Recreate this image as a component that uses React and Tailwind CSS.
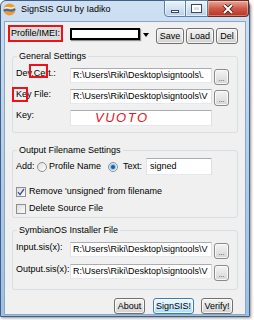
// SignSIS GUI window — Windows 7 styled dialog with three group boxes.

const PATH1 = 'R:\\Users\\Riki\\Desktop\\signtools\\.'
const PATH2 = 'R:\\Users\\Riki\\Desktop\\signtools\\V'

function Btn({ children, className = '', primary }) {
  return (
    <button
      className={`h-[16px] rounded-[3px] border text-[9px] leading-none text-black flex items-center justify-center shadow-[inset_0_0_0_1px_rgba(255,255,255,0.75)] ${
        primary
          ? 'border-[#3c7fb1] bg-linear-to-b from-[#eaf6fd] via-[#d9f0fc] to-[#a7d9f5]'
          : 'border-[#707070] bg-linear-to-b from-[#f2f2f2] via-[#e6e6e6] to-[#cfcfcf]'
      } ${className}`}
    >
      {children}
    </button>
  )
}

function Browse() {
  return (
    <button className="ml-[2px] mt-[1px] w-[15px] h-[16px] rounded-[3px] border border-[#8a8a8a] bg-linear-to-b from-[#f4f4f4] to-[#d6d6d6] shadow-[inset_0_0_0_1px_rgba(255,255,255,0.75)] flex items-end justify-center pb-[2px] text-[7px] leading-none text-[#333]">
      ...
    </button>
  )
}

function TextBox({ children, className = 'w-[142px] h-[15px]' }) {
  return (
    <div
      className={`bg-white border border-[#abadb3] border-l-[#e2e3ea] border-r-[#dbdfe6] border-b-[#e3e9ef] px-[2px] text-[9px] leading-[13px] whitespace-nowrap overflow-hidden ${className}`}
    >
      {children}
    </div>
  )
}

function PathRow({ label, value, mark }) {
  return (
    <div className="flex items-start">
      <span className="relative w-[57px] pl-[3px] leading-[11px]">
        {label}
        {mark}
      </span>
      <TextBox>{value}</TextBox>
      <Browse />
    </div>
  )
}

function Radio({ checked }) {
  return (
    <span className="w-[10px] h-[10px] rounded-full border border-[#8e8f8f] bg-linear-to-br from-[#dedede] to-white flex items-center justify-center">
      {checked && <span className="w-[4px] h-[4px] rounded-full bg-[#1b5fa8] shadow-[0_0_1px_1px_#7fc2ef]" />}
    </span>
  )
}

function Check({ checked }) {
  return (
    <span className="w-[10px] h-[10px] border border-[#8e8f8f] bg-linear-to-br from-[#dcdcdc] to-[#fcfcfc] flex items-center justify-center">
      {checked && (
        <svg width="8" height="8" viewBox="0 0 8 8">
          <path d="M1 4.2 L3 6.6 L7 1" stroke="#3d5496" strokeWidth="1.3" fill="none" />
        </svg>
      )}
    </span>
  )
}

function Group({ title, className = '', children }) {
  return (
    <fieldset className={`ml-[7px] w-[226px] border border-[#d5dfe5] rounded-[3px] ${className}`}>
      <legend className="ml-[4px] px-[2px] text-[9px] leading-[11px]">{title}</legend>
      {children}
    </fieldset>
  )
}

export default function App() {
  return (
    <div className="w-[254px] h-[320px] bg-white text-[9px] text-black font-['Liberation_Sans',Arial,sans-serif]">
      <div className="w-[250px] h-[317px] flex flex-col rounded-t-[6px] border border-[#3d5f88] bg-linear-to-b from-[#cfe0f3] via-[#b4cde9] to-[#9fbfe3] shadow-[1px_1px_3px_rgba(0,0,0,0.45)]">
        {/* title bar */}
        <div className="h-[20px] shrink-0 flex items-start">
          <svg className="ml-[2px] mt-[2px]" width="13" height="13" viewBox="0 0 13 13">
            <circle cx="6.5" cy="6.5" r="6" fill="#f39a2a" />
            <path d="M1 8 C4 4.5, 8 10.5, 12 6" stroke="#2a6fc0" strokeWidth="2.2" fill="none" />
            <path d="M1.5 5.5 C4.5 2.8, 8 7.5, 11.5 3.8" stroke="#fff" strokeWidth="1.2" fill="none" />
          </svg>
          <span className="ml-[5px] mt-[3px] leading-[11px]">SignSIS GUI by Iadiko</span>
          <div className="ml-auto -mt-px flex h-[17px]">
            <div className="w-[22px] rounded-bl-[4px] border border-[#5b7fa8] bg-linear-to-b from-[#eef4fb] via-[#d3e2f3] to-[#b9cfe9] shadow-[inset_0_0_0_1px_rgba(255,255,255,0.6)] flex items-end justify-center pb-[3px]">
              <span className="w-[8px] h-[3px] bg-white border border-[#3a4a5e]" />
            </div>
            <div className="w-[22px] border border-l-0 border-[#5b7fa8] bg-linear-to-b from-[#eef4fb] via-[#d3e2f3] to-[#b9cfe9] shadow-[inset_0_0_0_1px_rgba(255,255,255,0.6)] flex items-center justify-center">
              <span className="w-[9px] h-[7px] border-[2px] border-white outline outline-[#3a4a5e]" />
            </div>
            <div className="w-[41px] rounded-br-[4px] border border-l-0 border-[#6b2a22] bg-linear-to-b from-[#e6a79c] via-[#cf5a48] to-[#b8321f] shadow-[inset_0_0_0_1px_rgba(255,255,255,0.35)] flex items-center justify-center">
              <svg width="12" height="10" viewBox="0 0 12 10">
                <path d="M2 1 L10 9 M10 1 L2 9" stroke="#3a1a14" strokeWidth="3.6" />
                <path d="M2 1 L10 9 M10 1 L2 9" stroke="#fff" strokeWidth="2" />
              </svg>
            </div>
          </div>
        </div>

        {/* client area */}
        <div className="flex-1 mx-[3px] mb-[4px] bg-[#f0f0f0] border border-[#8da6c1] flex flex-col">
          <div className="flex items-start pt-[3px] pl-[3px]">
            <div className="h-[17px] w-[55px] border-2 border-[#e8131b] bg-[#dcdcdc] pl-[1px] leading-[13px] whitespace-nowrap">
              Profile/IMEI:
            </div>
            <div className="ml-[7px] mt-[3px] h-[12px] w-[70px] border-2 border-black bg-white shadow-[1px_1px_1px_rgba(0,0,0,0.4)]" />
            <svg className="ml-[3px] mt-[8px]" width="6" height="4" viewBox="0 0 6 4">
              <path d="M0 0 H6 L3 4 Z" fill="#000" />
            </svg>
            <Btn className="ml-[7px] mt-[3px] w-[28px]">Save</Btn>
            <Btn className="ml-[2px] mt-[3px] w-[28px]">Load</Btn>
            <Btn className="ml-[2px] mt-[3px] w-[22px]">Del</Btn>
          </div>

          <Group title="General Settings" className="mt-[7px] pb-[6px]">
            <div className="mt-[6px] flex flex-col gap-[4px]">
              <PathRow
                label="Dev.Cert.:"
                value={PATH1}
                mark={<span className="absolute left-[16px] -top-[4px] w-[19px] h-[14px] border-2 border-[#e8131b]" />}
              />
              <PathRow
                label="Key File:"
                value={PATH2}
                mark={<span className="absolute -left-[1px] -top-[2px] w-[16px] h-[15px] border-2 border-[#e8131b]" />}
              />
              <div className="flex items-start">
                <span className="w-[57px] pl-[3px] leading-[11px]">Key:</span>
                <TextBox className="w-[142px] h-[16px] pl-[24px]">
                  <span className="text-[13px] leading-[14px] italic tracking-[1.5px] text-[#e3151b]">VUOTO</span>
                </TextBox>
              </div>
            </div>
          </Group>

          <Group title="Output Filename Settings" className="mt-[12px] pb-[2px]">
            <div className="mt-[2px] h-[17px] flex items-center pl-[3px]">
              <span className="w-[21px]">Add:</span>
              <Radio />
              <span className="ml-[2px] w-[59px]">Profile Name</span>
              <Radio checked />
              <span className="ml-[5px] w-[23px]">Text:</span>
              <TextBox className="w-[66px] h-[17px] leading-[15px] pl-[3px]">signed</TextBox>
            </div>
            <div className="mt-[10px] h-[13px] flex items-center pl-[3px]">
              <Check checked />
              <span className="ml-[3px]">Remove 'unsigned' from filename</span>
            </div>
            <div className="mt-[4px] h-[13px] flex items-center pl-[3px]">
              <Check />
              <span className="ml-[3px]">Delete Source File</span>
            </div>
          </Group>

          <Group title="SymbianOS Installer File" className="mt-[7px] pb-[8px]">
            <div className="mt-[6px] flex flex-col gap-[5px]">
              <PathRow label="Input.sis(x):" value={PATH2} />
              <PathRow label="Output.sis(x):" value={PATH2} />
            </div>
          </Group>

          <div className="mt-[8px] flex justify-end pr-[12px]">
            <Btn className="w-[31px]">About</Btn>
            <Btn primary className="ml-[8px] w-[41px]">SignSIS!</Btn>
            <Btn className="ml-[7px] w-[32px]">Verify!</Btn>
          </div>
        </div>
      </div>
    </div>
  )
}
